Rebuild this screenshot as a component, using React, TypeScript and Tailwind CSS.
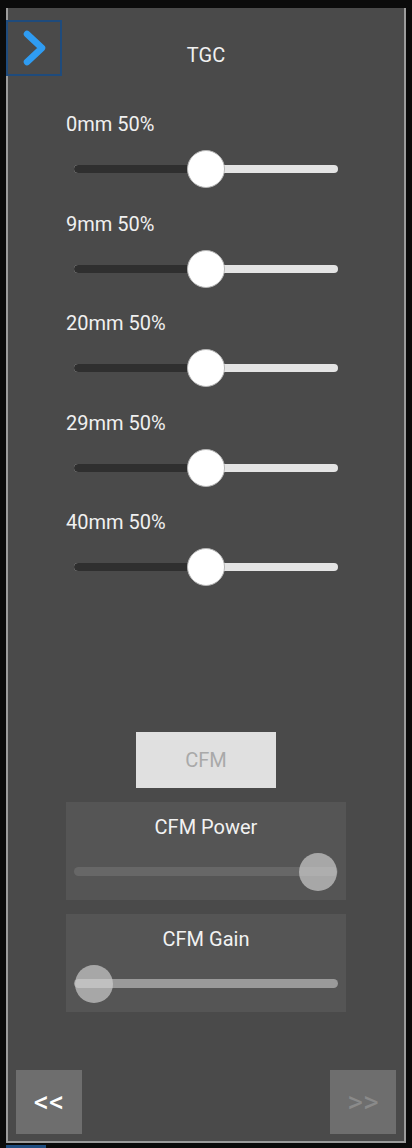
import { useState } from "react";

const depths = ["0mm", "9mm", "20mm", "29mm", "40mm"];

const TgcSlider = ({ label, value }: { label: string; value: number }) => {
  return (
    <div className="flex flex-col pl-[58px] mb-[25.5px]">
      <p className="h-5 leading-5 text-[20px] text-[#f0f0f0]">
        {label} {value}%
      </p>
      <div className="relative mt-4 h-[38px] w-[264px] ml-2 flex items-center">
        <div className="h-2 w-full rounded-full bg-[#e4e4e4] overflow-hidden">
          <div className="h-full bg-[#2f2f2f]" style={{ width: `${value}%` }} />
        </div>
        <div
          className="absolute top-0 h-[38px] w-[38px] -ml-[19px] rounded-full bg-white border border-[#b5b5b5]"
          style={{ left: `${value}%` }}
        />
      </div>
    </div>
  );
};

const CfmSlider = ({ title, pos, track }: { title: string; pos: number; track: string }) => {
  return (
    <div className="w-[280px] h-[98px] bg-[#555555] flex flex-col items-center pt-[15px]">
      <p className="h-5 leading-5 text-[20px] text-[#f2f2f2]">{title}</p>
      <div className="relative mt-[16px] h-[38px] w-[264px] flex items-center">
        <div className={`h-[9px] w-full rounded-full ${track}`} />
        <div
          className="absolute top-0 h-[38px] w-[38px] rounded-full bg-[#d4d4d4]/65"
          style={{ left: pos }}
        />
      </div>
    </div>
  );
};

export default function App() {
  const [open, setOpen] = useState(false);

  return (
    <div
      className="w-[412px] h-[1148px] bg-[#0b0b0b] pt-2 pl-[6px] overflow-hidden"
      style={{ fontFamily: "Roboto, 'Liberation Sans', sans-serif" }}
    >
      <div className="relative w-[400px] h-[1135px] bg-[#4a4a4a] border-x-2 border-b-2 border-[#9c9c9c] flex flex-col">
        <button
          onClick={() => setOpen(!open)}
          className="absolute -left-[2px] top-[12px] w-[56px] h-[56px] border-2 border-[#1f4b7c] flex items-center justify-center"
        >
          <svg width="56" height="56" viewBox="0 0 56 56" className="absolute -left-[2px] -top-[2px]">
            <polyline
              points="21,14 36,28 21,42"
              fill="none"
              stroke="#2f9cf2"
              strokeWidth="6.5"
              strokeLinecap="round"
              strokeLinejoin="round"
            />
          </svg>
        </button>

        <p className="mt-[37px] h-5 leading-5 text-center text-[20px] text-[#f0f0f0]">TGC</p>

        <div className="mt-[49px] flex flex-col">
          {depths.map((d) => (
            <TgcSlider key={d} label={d} value={50} />
          ))}
        </div>

        <div className="mt-[120px] flex flex-col items-center">
          <button className="w-[140px] h-[56px] bg-[#e0e0e0] text-[20px] text-[#a9a9a9]">CFM</button>
          <div className="mt-[14px]">
            <CfmSlider title="CFM Power" pos={225} track="bg-[#676767]" />
          </div>
          <div className="mt-[14px]">
            <CfmSlider title="CFM Gain" pos={1} track="bg-[#9a9a9a]" />
          </div>
        </div>

        <div className="mt-auto mb-[7px] flex justify-between px-2">
          <button className="w-[66px] h-[64px] bg-[#6e6e6e] text-[30px] leading-none text-white">&lt;&lt;</button>
          <button className="w-[66px] h-[64px] bg-[#6e6e6e] text-[30px] leading-none text-[#8a8a8a]">&gt;&gt;</button>
        </div>
      </div>
      <div className="mt-[2px] w-10 h-[3px] bg-[#1e4d80]" />
    </div>
  );
}
